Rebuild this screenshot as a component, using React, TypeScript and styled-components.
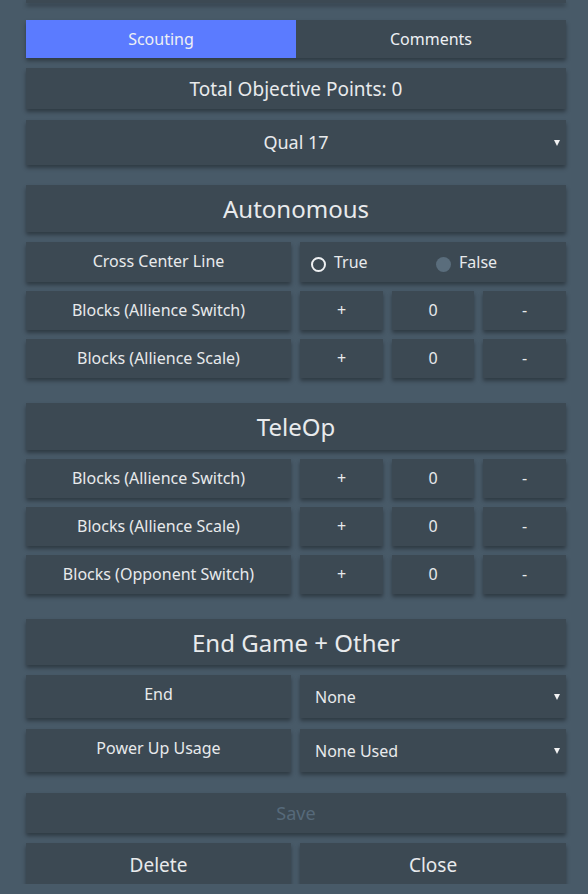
import React, { useState } from "react";
import styled, { createGlobalStyle } from "styled-components";

const Global = createGlobalStyle`
  html, body { margin: 0; padding: 0; background: #485a68; }
  body { font-family: "Noto Sans", "Open Sans", sans-serif; color: #e8eaec; }
  * { box-sizing: border-box; }
`;

const Page = styled.div`
  width: 540px;
  margin-left: 26px;
  display: flex;
  flex-direction: column;
`;

const Card = styled.div<{ $h: number; $mt: number; $size?: number; $pb?: number }>`
  height: ${(p) => p.$h}px;
  margin-top: ${(p) => p.$mt}px;
  padding-bottom: ${(p) => p.$pb ?? 0}px;
  background: #3c4953;
  box-shadow: 0 3px 4px rgba(0, 0, 0, 0.35);
  display: flex;
  align-items: center;
  justify-content: center;
  font-size: ${(p) => p.$size ?? 16}px;
  color: #e8eaec;
  position: relative;
`;

const TopStub = styled.div`
  height: 3px;
  background: #3c4953;
  box-shadow: 0 3px 4px rgba(0, 0, 0, 0.35);
`;

const Tabs = styled.div`
  margin-top: 17px;
  height: 38px;
  display: grid;
  grid-template-columns: 270px 1fr;
  box-shadow: 0 3px 4px rgba(0, 0, 0, 0.35);
`;

const Tab = styled.div<{ $active?: boolean }>`
  background: ${(p) => (p.$active ? "#5b7bff" : "#3c4953")};
  display: flex;
  align-items: center;
  justify-content: center;
  font-size: 16px;
  color: #eef0f4;
`;

const Arrow = styled.span`
  position: absolute;
  right: 6px;
  top: 50%;
  margin-top: -3px;
  width: 0;
  height: 0;
  border-left: 3px solid transparent;
  border-right: 3px solid transparent;
  border-top: 6px solid #f2f2f2;
`;

const Row = styled.div<{ $h: number; $mt: number }>`
  margin-top: ${(p) => p.$mt}px;
  height: ${(p) => p.$h}px;
  display: grid;
  grid-template-columns: 265px 1fr;
  gap: 9px;
`;

const Cell = styled.div<{ $align?: string; $pt?: number }>`
  background: #3c4953;
  box-shadow: 0 3px 4px rgba(0, 0, 0, 0.35);
  display: flex;
  align-items: ${(p) => p.$align ?? "center"};
  justify-content: center;
  padding-top: ${(p) => p.$pt ?? 0}px;
  padding-bottom: 2px;
  font-size: 16px;
  color: #e8eaec;
  position: relative;
`;

const Counter = styled.div`
  display: grid;
  grid-template-columns: 83px 82px 1fr;
  gap: 9px;
`;

const RadioGroup = styled.div`
  background: #3c4953;
  box-shadow: 0 3px 4px rgba(0, 0, 0, 0.35);
  display: grid;
  grid-template-columns: 125px 1fr;
  align-items: center;
  padding-left: 11px;
  font-size: 16px;
`;

const RadioOption = styled.label`
  display: flex;
  align-items: center;
  gap: 8px;
`;

const RadioDot = styled.span<{ $filled?: boolean }>`
  width: 15px;
  height: 15px;
  border-radius: 50%;
  margin-top: 4px;
  ${(p) =>
    p.$filled
      ? "background: #5a6d7c;"
      : "border: 2px solid #eef0f2; background: transparent;"}
`;

const SelectCell = styled(Cell)`
  justify-content: flex-start;
  padding-left: 15px;
  padding-top: 3px;
`;

const Half = styled.div<{ $h: number; $mt: number }>`
  margin-top: ${(p) => p.$mt}px;
  height: ${(p) => p.$h}px;
  display: grid;
  grid-template-columns: 265px 1fr;
  gap: 9px;
`;

const BigButton = styled(Cell)`
  font-size: 19px;
  padding-top: 3px;
  padding-bottom: 0;
`;

const SaveButton = styled(Card)`
  color: #56697a;
  font-size: 18px;
`;

function CounterRow({ label, mt }: { label: string; mt: number }) {
  const [n] = useState(0);
  return (
    <Row $h={39} $mt={mt}>
      <Cell>{label}</Cell>
      <Counter>
        <Cell>+</Cell>
        <Cell>{n}</Cell>
        <Cell>-</Cell>
      </Counter>
    </Row>
  );
}

export default function App() {
  return (
    <>
      <Global />
      <Page>
        <TopStub />
        <Tabs>
          <Tab $active>Scouting</Tab>
          <Tab>Comments</Tab>
        </Tabs>
        <Card $h={41} $mt={10} $size={19}>
          Total Objective Points: 0
        </Card>
        <Card $h={45} $mt={11} $size={18} $pb={2}>
          Qual 17
          <Arrow />
        </Card>

        <Card $h={47} $mt={20} $size={24}>
          Autonomous
        </Card>
        <Row $h={40} $mt={10}>
          <Cell $align="flex-start" $pt={8}>
            Cross Center Line
          </Cell>
          <RadioGroup>
            <RadioOption>
              <RadioDot />
              True
            </RadioOption>
            <RadioOption>
              <RadioDot $filled />
              False
            </RadioOption>
          </RadioGroup>
        </Row>
        <CounterRow label="Blocks (Allience Switch)" mt={9} />
        <CounterRow label="Blocks (Allience Scale)" mt={9} />

        <Card $h={47} $mt={25} $size={24}>
          TeleOp
        </Card>
        <CounterRow label="Blocks (Allience Switch)" mt={9} />
        <CounterRow label="Blocks (Allience Scale)" mt={9} />
        <CounterRow label="Blocks (Opponent Switch)" mt={9} />

        <Card $h={46} $mt={25} $size={24}>
          End Game + Other
        </Card>
        <Row $h={43} $mt={10}>
          <Cell $align="flex-start" $pt={8}>
            End
          </Cell>
          <SelectCell>
            None
            <Arrow />
          </SelectCell>
        </Row>
        <Row $h={43} $mt={11}>
          <Cell $align="flex-start" $pt={8}>
            Power Up Usage
          </Cell>
          <SelectCell>
            None Used
            <Arrow />
          </SelectCell>
        </Row>

        <SaveButton $h={40} $mt={21}>
          Save
        </SaveButton>
        <Half $h={41} $mt={10}>
          <BigButton>Delete</BigButton>
          <BigButton>Close</BigButton>
        </Half>
      </Page>
    </>
  );
}
